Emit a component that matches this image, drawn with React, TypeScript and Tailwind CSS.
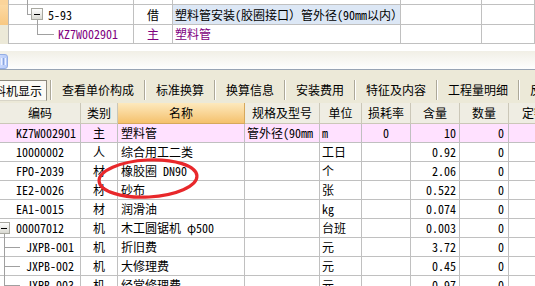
import React from "react";

const FONT = "font-['Noto_Sans_Mono_CJK_SC','Noto_Sans_CJK_SC',sans-serif]";
const LINE = "border-[#c0c0c0]";

function TopTable() {
  const grid = "grid grid-cols-[9px_125px_39px_228px_81px_53px]";
  const cell = `border-r border-b ${LINE} flex items-center overflow-hidden whitespace-nowrap`;
  return (
    <div className="relative">
      <div className={`${grid} h-[5px]`}>
        <div className="bg-[#fbd49a] border-r border-[#b8b8b8]" />
        <div className={cell} />
        <div className={cell} />
        <div className={cell} />
        <div className={cell} />
        <div className={cell} />
      </div>
      <div className={`${grid} h-[20px]`}>
        <div className="bg-gradient-to-b from-[#fcd9a2] to-[#f8c882] border-r border-[#b8b8b8]" />
        <div className={`${cell} pl-[39px]`}>5-93</div>
        <div className={`${cell} justify-center`}>借</div>
        <div className={`${cell} bg-[#dce7f5] pl-[2px]`}>塑料管安装(胶圈接口）管外径(90mm以内）</div>
        <div className={cell} />
        <div className={cell} />
      </div>
      <div className={`${grid} h-[19px]`}>
        <div className="bg-[#ece9d8] border-r border-[#b8b8b8]" />
        <div className={`${cell} pl-[49px] text-[#800080]`}>KZ7W002901</div>
        <div className={`${cell} justify-center text-[#800080]`}>主</div>
        <div className={`${cell} pl-[2px] text-[#800080]`}>塑料管</div>
        <div className={cell} />
        <div className={cell} />
      </div>
      <svg className="absolute left-0 top-0 pointer-events-none" width="80" height="44">
        <defs>
          <linearGradient id="boxg" x1="0" y1="0" x2="0" y2="1">
            <stop offset="0" stopColor="#ffffff" />
            <stop offset="1" stopColor="#d8d8d0" />
          </linearGradient>
        </defs>
        <line x1="27.5" y1="0" x2="27.5" y2="14" stroke="#a0a0a0" />
        <line x1="27" y1="14.5" x2="31" y2="14.5" stroke="#a0a0a0" />
        <rect x="31.5" y="8.5" width="11" height="11" fill="url(#boxg)" stroke="#a8a8a0" />
        <line x1="34" y1="14.5" x2="40" y2="14.5" stroke="#000" />
        <line x1="37.5" y1="20" x2="37.5" y2="34" stroke="#a0a0a0" />
        <line x1="37" y1="34.5" x2="54" y2="34.5" stroke="#a0a0a0" />
      </svg>
    </div>
  );
}

function Scrollbar() {
  return (
    <div className="h-[19px] bg-gradient-to-b from-[#f1efe6] to-[#fefefe] border-b border-[#98a4b4] flex items-center">
      <div className="w-[9px] h-[15px] ml-[-1px] mt-[2px] rounded-r-[3px] bg-gradient-to-r from-[#c8d7fc] to-[#b7cbf8] border border-[#94ade4] flex items-center justify-center gap-[1px]">
        <div className="w-[1px] h-[7px] bg-[#eef3ff]" />
        <div className="w-[1px] h-[7px] bg-[#8ca6de]" />
        <div className="w-[1px] h-[7px] bg-[#eef3ff]" />
      </div>
    </div>
  );
}

function Sep() {
  return (
    <div className="flex h-[20px] shrink-0">
      <div className="w-[1px] bg-[#aca899]" />
      <div className="w-[1px] bg-white" />
    </div>
  );
}

function Tabs() {
  const tabs = ["查看单价构成", "标准换算", "换算信息", "安装费用", "特征及内容", "工程量明细", "反查图形工程量"];
  return (
    <div className="h-[33px] bg-[#ece9d8] flex items-start pt-[10px] whitespace-nowrap">
      <div className="w-[47px] h-[21px] shrink-0 overflow-hidden bg-[#fbfaf5] border-t border-r border-b border-t-[#8d8a7e] border-r-[#8d8a7e] border-b-[#d8d5c8] flex items-center">
        <span className="ml-[-18px]">工料机显示</span>
      </div>
      <div className="w-[3px] shrink-0" />
      {tabs.map((t) => (
        <React.Fragment key={t}>
          <Sep />
          <div className="px-[10px] h-[20px] flex items-center shrink-0">{t}</div>
        </React.Fragment>
      ))}
    </div>
  );
}

type Row = {
  code: string;
  type: string;
  name: string;
  spec?: string;
  unit: string;
  loss?: string;
  qty: string;
  amt: string;
  pink?: boolean;
  indent?: number;
};

const rows: Row[] = [
  { code: "KZ7W002901", type: "主", name: "塑料管", spec: "管外径(90mm", unit: "m", loss: "0", qty: "10", amt: "0", pink: true },
  { code: "10000002", type: "人", name: "综合用工二类", unit: "工日", qty: "0.92", amt: "0" },
  { code: "FPO-2039", type: "材", name: "橡胶圈 DN90", unit: "个", qty: "2.06", amt: "0" },
  { code: "IE2-0026", type: "材", name: "砂布", unit: "张", qty: "0.522", amt: "0" },
  { code: "EA1-0015", type: "材", name: "润滑油", unit: "kg", qty: "0.074", amt: "0" },
  { code: "00007012", type: "机", name: "木工圆锯机 φ500", unit: "台班", qty: "0.003", amt: "0" },
  { code: "JXPB-001", type: "机", name: "折旧费", unit: "元", qty: "3.72", amt: "0", indent: 26 },
  { code: "JXPB-002", type: "机", name: "大修理费", unit: "元", qty: "0.45", amt: "0", indent: 26 },
  { code: "JXPB-003", type: "机", name: "经常修理费", unit: "元", qty: "0.97", amt: "0", indent: 26 },
];

const LGRID = "grid grid-cols-[81px_37px_127px_75px_42px_49px_49px_49px_60px]";

function LowerTable() {
  const hcell = "h-[21px] border-r border-b border-[#cbc7b8] bg-[#efede3] flex items-center justify-center overflow-hidden whitespace-nowrap";
  const heads = ["编码", "类别", "名称", "规格及型号", "单位", "损耗率", "含量", "数量", "定额价"];
  const cell = `h-[19px] border-r border-b ${LINE} flex items-center overflow-hidden whitespace-nowrap`;
  return (
    <div>
      <div className={LGRID}>
        {heads.map((h, i) =>
          i === 2 ? (
            <div key={h} className="h-[21px] border-r border-b border-[#d6a85c] bg-gradient-to-b from-[#fde9bd] to-[#f4c16c] flex items-center justify-center">
              {h}
            </div>
          ) : (
            <div key={h} className={`${hcell} ${i === 8 ? "justify-start pl-[13px]" : ""}`}>
              {h}
            </div>
          )
        )}
      </div>
      <div className="relative">
        {rows.map((r) => (
          <div key={r.code} className={`${LGRID} ${r.pink ? "bg-[#ffe1ff]" : "bg-white"}`}>
            <div className={cell} style={{ paddingLeft: r.indent ?? 16 }}>{r.code}</div>
            <div className={`${cell} justify-center`}>{r.type}</div>
            <div className={`${cell} pl-[3px]`}>{r.name}</div>
            <div className={`${cell} pl-[2px]`}>{r.spec ?? ""}</div>
            <div className={`${cell} pl-[2px]`}>{r.unit}</div>
            <div className={`${cell} justify-center`}>{r.loss ?? ""}</div>
            <div className={`${cell} justify-end pr-[3px]`}>{r.qty}</div>
            <div className={`${cell} justify-end pr-[4px]`}>{r.amt}</div>
            <div className={cell} />
          </div>
        ))}
        <svg className="absolute left-0 top-0 pointer-events-none" width="24" height="171">
          <defs>
            <linearGradient id="boxg2" x1="0" y1="0" x2="0" y2="1">
              <stop offset="0" stopColor="#ffffff" />
              <stop offset="1" stopColor="#d8d8d0" />
            </linearGradient>
          </defs>
          <rect x="-1.5" y="98.5" width="11" height="11" fill="url(#boxg2)" stroke="#a8a8a0" />
          <line x1="1" y1="104.5" x2="7" y2="104.5" stroke="#000" />
          <line x1="4.5" y1="110" x2="4.5" y2="171" stroke="#a0a0a0" />
          <line x1="4" y1="123.5" x2="20" y2="123.5" stroke="#a0a0a0" />
          <line x1="4" y1="142.5" x2="20" y2="142.5" stroke="#a0a0a0" />
          <line x1="4" y1="161.5" x2="20" y2="161.5" stroke="#a0a0a0" />
        </svg>
      </div>
    </div>
  );
}

export default function App() {
  return (
    <div className={`relative w-[535px] h-[286px] overflow-hidden bg-white text-[12px] leading-none text-black ${FONT}`}>
      <TopTable />
      <div className="h-[7px] bg-white" />
      <Scrollbar />
      <Tabs />
      <LowerTable />
      <svg className="absolute left-0 top-0 pointer-events-none" width="535" height="286">
        <ellipse cx="148" cy="178.5" rx="49" ry="18.5" transform="rotate(-3 148 178.5)" fill="none" stroke="#e8282b" strokeWidth="3.2" />
      </svg>
    </div>
  );
}
